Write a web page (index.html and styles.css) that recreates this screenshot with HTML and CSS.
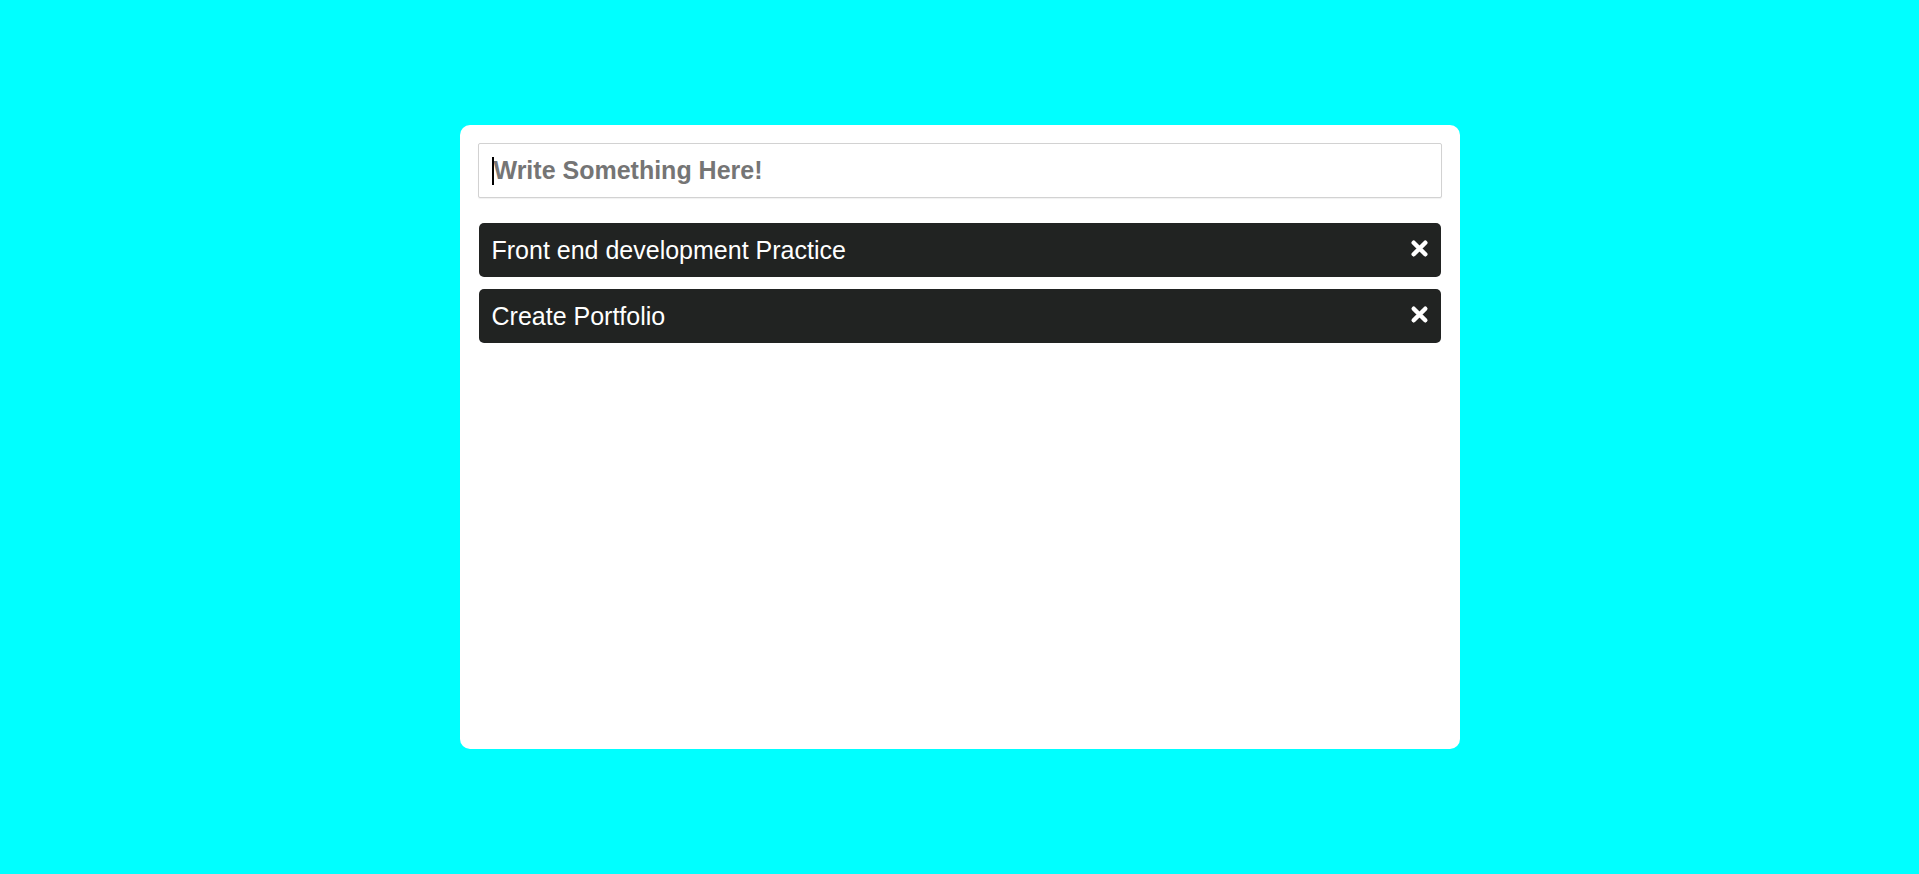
FILE: index.html
```html
<!DOCTYPE html>
<html>
<head>
<meta charset="utf-8">
<link rel="stylesheet" href="styles.css">
</head>
<body>
<div class="card">
  <div class="input-wrap">
    <input class="todo-input" type="text" placeholder="Write Something Here!" autofocus>
    <span class="caret"></span>
  </div>
  <ul class="todo-list">
    <li class="todo-item"><span class="todo-text">Front end development Practice</span>
      <svg class="close" viewBox="0 0 18 18" width="19" height="19"><path d="M3.5 3.5 L14.5 14.5 M14.5 3.5 L3.5 14.5" stroke="#fff" stroke-width="4.2" stroke-linecap="round"/></svg>
    </li>
    <li class="todo-item"><span class="todo-text">Create Portfolio</span>
      <svg class="close" viewBox="0 0 18 18" width="19" height="19"><path d="M3.5 3.5 L14.5 14.5 M14.5 3.5 L3.5 14.5" stroke="#fff" stroke-width="4.2" stroke-linecap="round"/></svg>
    </li>
  </ul>
</div>
</body>
</html>
```
FILE: styles.css
```css
html, body {
  margin: 0;
  padding: 0;
}
body {
  background: #00ffff;
  font-family: "Liberation Sans", Arial, sans-serif;
  min-height: 874px;
}
.card {
  box-sizing: border-box;
  width: 1000px;
  height: 624px;
  margin: 125px auto 0;
  background: #fff;
  border-radius: 10px;
  padding: 18px;
}
.input-wrap {
  position: relative;
}
.caret {
  position: absolute;
  left: 14px;
  top: 14px;
  width: 2px;
  height: 28px;
  background: #000;
}
.todo-input {
  box-sizing: border-box;
  display: block;
  width: 100%;
  height: 55px;
  border: 1px solid #d2d2d2;
  border-radius: 2px;
  padding: 0 12px 0 15px;
  font-family: "Liberation Sans", Arial, sans-serif;
  font-size: 25px;
  font-weight: bold;
  color: #333;
  outline: none;
  caret-color: transparent;
  box-shadow: 0 1px 1px rgba(0,0,0,0.06);
}
.todo-input::placeholder {
  color: #757575;
}
.todo-list {
  list-style: none;
  margin: 25px 1px 0;
  padding: 0;
  display: flex;
  flex-direction: column;
  gap: 12px;
}
.todo-item {
  box-sizing: border-box;
  height: 54px;
  background: #212322;
  border-radius: 5px;
  color: #fff;
  display: flex;
  align-items: center;
  justify-content: space-between;
  padding: 0 12px 0 13px;
  font-size: 25px;
}
.todo-text {
  line-height: 1;
}
.close {
  display: block;
  margin-top: -3px;
}
```
